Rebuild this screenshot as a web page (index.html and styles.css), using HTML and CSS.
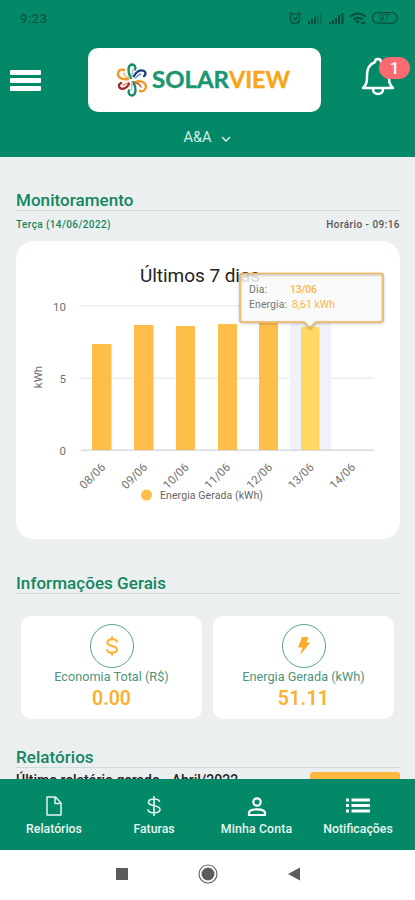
FILE: index.html
```html
<!DOCTYPE html>
<html lang="pt-BR">
<head>
    <meta charset="UTF-8">
    <meta name="viewport" content="width=device-width, initial-scale=1.0">
    <title>SolarView</title>
    <link rel="stylesheet" href="styles.css">
</head>
<body>
    <header>
        <div class="status-bar">
            <svg class="status-text" width="30" height="16"><text x="0" y="13" textLength="27">9:23</text></svg>
            <svg class="status-icons" width="112" height="16" viewBox="0 0 112 16">
                <g fill="none" stroke="#0b4c3b" stroke-width="1.2">
                    <circle cx="8" cy="8.500" r="4.800"/>
                    <path d="M2 4.500l3-2.500M14 4.500l-3-2.500M6 8l2 2 2.500-3M4 13.500l1-1M12 13.500l-1-1"/>
                    <rect x="85.500" y="2.600" width="24.500" height="10.500" rx="5"/>
                </g>
                <g fill="#0b4c3b">
                    <path d="M21 11h2v3h-2zM24 9h2v5h-2zM27 7h2v7h-2z"/>
                    <path d="M30 5h2v9h-2zM33 3h1.500v11h-1.500z" opacity=".4"/>
                    <path d="M42 12h2v2h-2zM45 10h2v4h-2zM48 8h2v6h-2zM51 5h2v9h-2zM54.500 3h2v11h-2z"/>
                </g>
                <g fill="none" stroke="#0b4c3b" stroke-width="2">
                    <path d="M63.500 6.500q7.500-6 15 0M66.500 9.500q4.500-3.600 9 0"/>
                </g>
                <path d="M68.500 11q2-1.500 4 0l-2 3zM74 12h4v2h-4z" fill="#0b4c3b"/>
                <text class="battery" x="97" y="11" text-anchor="middle">97</text>
            </svg>
        </div>

        <div class="top-row">
            <button class="menu-button" aria-label="Menu">
                <span></span><span></span><span></span>
            </button>
            <div class="logo">
                <svg width="32" height="36" viewBox="0 0 32 36" fill="none" stroke-width="2.400" stroke-linecap="round">
                    <path d="M15 16C11 10 12 3 16 2.500c3 0 4 3 3 5" stroke="#1c8c66"/>
                    <path d="M16 16c0-4 0-6 1-8" stroke="#8fd0b8" stroke-width="1.500"/>
                    <path d="M18 14c2-4 6-7 10-5 2 1 2 4 0 5" stroke="#243c7c"/>
                    <path d="M19 16c2-1 4-4 6-4" stroke="#5d8ec0" stroke-width="1.300"/>
                    <path d="M19 20c5-2 10 0 11 4 0 4-3 6-6 5" stroke="#ee9a24"/>
                    <path d="M19 21c4 0 5 2 6 4" stroke="#d9542b" stroke-width="1.500"/>
                    <path d="M17 20c4 6 3 13-1 13.500-3 0-4-3-3-5" stroke="#1c8c66"/>
                    <path d="M16 20c0 4 0 6-1 8" stroke="#a6c9c4" stroke-width="1.500"/>
                    <path d="M13 22c-2 4-6 6-9 4-2-2-1-4 1-5" stroke="#a3242b"/>
                    <path d="M13 20c-2 1-4 3-6 3" stroke="#d2844c" stroke-width="1.300"/>
                    <path d="M12 17C7 18 2 16 2 12c0-4 3-5 6-4" stroke="#ee9a24"/>
                    <path d="M13 16c-4-1-5-3-5-5" stroke="#efb564" stroke-width="1.500"/>
                </svg>
                <svg class="logo-text" width="142" height="32">
                    <text x="1" y="24" textLength="77" lengthAdjust="spacingAndGlyphs">SOLAR</text>
                    <text class="view" x="78" y="24" textLength="61" lengthAdjust="spacingAndGlyphs">VIEW</text>
                </svg>
            </div>
            <div class="bell">
                <svg width="34" height="40" viewBox="0 0 34 40" fill="none" stroke="#fff" stroke-width="2.500" stroke-linejoin="round" stroke-linecap="round">
                    <path d="M2 31c4-4 4-6 4-13C6 11 9 7 14 5c0-4 6-4 6 0 5 2 8 6 8 13 0 7 0 9 4 13z"/>
                    <path d="M12 32c0 3 2 5 5 5s5-2 5-5"/>
                </svg>
                <span class="badge">1</span>
            </div>
        </div>

        <div class="account">
            <span>A&amp;A</span>
            <svg width="10" height="6" viewBox="0 0 10 6" fill="none" stroke="#d5ebe3" stroke-width="1.500"><path d="M1 1l4 4 4-4"/></svg>
        </div>
    </header>

    <main>
        <section class="monitoring">
            <h2>Monitoramento</h2>
            <div class="date-row">
                <span class="day">Terça (14/06/2022)</span>
                <span class="time">Horário - 09:16</span>
            </div>
            <div class="chart-card">
                <svg width="384" height="298" viewBox="0 0 384 298">
                    <text class="chart-title" x="124" y="41" textLength="120">Últimos 7 dias</text>

                    <!-- Grid -->
                    <g fill="#eaecef">
                        <rect x="65" y="64" width="293" height="1.500"/>
                        <rect x="65" y="136.500" width="293" height="1.500"/>
                    </g>
                    <rect x="274" y="65" width="41" height="144" fill="#eff3f9"/>
                    <rect x="65" y="208.500" width="293" height="1.500" fill="#d9dae4"/>

                    <!-- Bars -->
                    <g fill="#ffbe4a">
                        <rect x="76" y="103" width="19.500" height="106"/>
                        <rect x="118" y="84" width="19.500" height="125"/>
                        <rect x="160" y="85" width="19" height="124"/>
                        <rect x="202" y="83" width="19" height="126"/>
                        <rect x="243" y="82" width="19" height="127"/>
                    </g>
                    <rect x="285" y="86" width="18.500" height="123" fill="#ffd862"/>

                    <!-- Axis -->
                    <g class="axis">
                        <text x="50" y="70" text-anchor="end">10</text>
                        <text x="50" y="142" text-anchor="end">5</text>
                        <text x="50" y="214" text-anchor="end">0</text>
                        <text transform="translate(26 136) rotate(-90)" text-anchor="middle">kWh</text>
                        <text transform="translate(90 227) rotate(-45)" text-anchor="end">08/06</text>
                        <text transform="translate(132 227) rotate(-45)" text-anchor="end">09/06</text>
                        <text transform="translate(173.500 227) rotate(-45)" text-anchor="end">10/06</text>
                        <text transform="translate(215 227) rotate(-45)" text-anchor="end">11/06</text>
                        <text transform="translate(257 227) rotate(-45)" text-anchor="end">12/06</text>
                        <text transform="translate(298.500 227) rotate(-45)" text-anchor="end">13/06</text>
                        <text transform="translate(340 227) rotate(-45)" text-anchor="end">14/06</text>
                    </g>

                    <circle cx="130.500" cy="254" r="5.500" fill="#ffbe4a"/>
                    <text class="legend" x="144" y="258" textLength="103">Energia Gerada (kWh)</text>

                    <!-- Tooltip -->
                    <path class="tooltip-fill" d="M226 32.500h139q2 0 2 2v44.500q0 2-2 2h-65l-6 6-6-6h-62q-2 0-2-2v-44.500q0-2 2-2z"/>
                    <path class="tooltip-border" d="M226 32.500h139q2 0 2 2v44.500q0 2-2 2h-65l-6 6-6-6h-62q-2 0-2-2v-44.500q0-2 2-2z"/>
                    <g class="tip">
                        <text x="233" y="52" textLength="18">Dia:</text>
                        <text x="233" y="67" textLength="38">Energia:</text>
                        <text class="tip-value bold" x="274" y="52" textLength="27">13/06</text>
                        <text class="tip-value" x="276" y="67" textLength="43">8,61 kWh</text>
                    </g>
                </svg>
            </div>
        </section>

        <section class="info">
            <h2>Informações Gerais</h2>
            <div class="cards">
                <div class="card">
                    <div class="circle">
                        <svg width="12" height="20" viewBox="0 0 12 20" fill="none" stroke="#fbb02f" stroke-width="2">
                            <path d="M11 6.500C11 4 8.500 3.300 6 3.300S1.300 4.300 1.300 6.500C1.300 11 11 9 11 13.500c0 2.200-2.500 3.200-5 3.200s-5-1-5-3.400M6 .500v3M6 16.500v3"/>
                        </svg>
                    </div>
                    <p class="label">Economia Total (R$)</p>
                    <p class="value">0.00</p>
                </div>
                <div class="card">
                    <div class="circle">
                        <svg width="14" height="20" viewBox="0 0 14 20"><path d="M5 1h6.500L9.500 6.500H13.500L3 19l2.500-7.500H1z" fill="#fbac2b"/></svg>
                    </div>
                    <p class="label">Energia Gerada (kWh)</p>
                    <p class="value wide">51.11</p>
                </div>
            </div>
        </section>

        <section class="reports">
            <h2>Relatórios</h2>
            <div class="report-row">
                <span>Último relatório gerado - Abril/2022</span>
                <span class="report-button"></span>
            </div>
        </section>
    </main>

    <nav class="tabs">
        <a class="tab">
            <svg width="18" height="20" viewBox="0 0 18 20" fill="none" stroke="#e3f3ed" stroke-width="1.500" stroke-linejoin="round"><path d="M2 1h8.500L16 7v12H2zM10 1v6.500h6"/></svg>
            <span>Relatórios</span>
        </a>
        <a class="tab">
            <svg width="14" height="20" viewBox="0 0 14 20" fill="none" stroke="#e3f3ed" stroke-width="1.600"><path d="M12.500 6C12.500 3.500 10 3 7 3S1.500 4 1.500 6.300C1.500 11.500 13 8 13 13.500c0 2.500-3 3.300-6 3.300s-6-1-6-3.600M7 0v20"/></svg>
            <span>Faturas</span>
        </a>
        <a class="tab">
            <svg width="20" height="20" viewBox="0 0 20 20" fill="none" stroke="#fff" stroke-width="2.200"><circle cx="10" cy="6" r="3.700"/><path d="M2 19v-2C2 14.500 6 13.300 10 13.300s8 1.200 8 3.700v2z"/></svg>
            <span class="account-label">Minha Conta</span>
        </a>
        <a class="tab">
            <svg width="26" height="20" viewBox="0 0 26 20" fill="#fff"><path d="M1 2.500h3v3H1zM6.500 2.500H25v3H6.500zM1 8h3v3H1zM6.500 8H25v3H6.500zM1 13.500h3v3H1zM6.500 13.500H25v3H6.500z"/></svg>
            <span>Notificações</span>
        </a>
    </nav>

    <div class="system-bar">
        <svg width="12" height="20" viewBox="0 0 12 20"><rect y="4" width="12" height="12" fill="#5c5c5c"/></svg>
        <svg width="20" height="20" viewBox="0 0 20 20"><circle cx="10" cy="10" r="9" fill="none" stroke="#666" stroke-width="1.200"/><circle cx="10" cy="10" r="6.500" fill="#5c5c5c"/></svg>
        <svg width="12" height="20" viewBox="0 0 12 20"><path d="M12 3.500v13L0 10z" fill="#5c5c5c"/></svg>
    </div>
</body>
</html>
```
FILE: styles.css
```css
* {
    box-sizing: border-box;
}

body {
    font-family: Roboto, sans-serif;
    margin: 0;
    height: 900px;
    background-color: #ebeff0;
    display: flex;
    flex-direction: column;
    overflow: hidden;
}

svg {
    display: block;
    flex-shrink: 0;
}

/* Header */
header {
    height: 157px;
    flex-shrink: 0;
    background-color: #038967;
}

.status-bar {
    display: flex;
    justify-content: space-between;
    padding: 10px 16px 0 20px;
    height: 48px;
}

.status-text text {
    font-size: 13px;
    fill: #0b4c3b;
}

.battery {
    font-size: 9px;
    fill: #0b4c3b;
}

.top-row {
    display: flex;
    align-items: center;
    height: 64px;
    padding-left: 10px;
}

.menu-button {
    display: flex;
    flex-direction: column;
    gap: 3px;
    width: 31px;
    padding: 0;
    border: none;
    background: none;
}

.menu-button span {
    height: 5px;
    border-radius: 1px;
    background-color: #fff;
}

.logo {
    display: flex;
    align-items: center;
    width: 233px;
    height: 64px;
    margin-left: 47px;
    padding-left: 28px;
    border-radius: 10px;
    background-color: #fff;
}

.logo-text {
    margin-left: 3px;
}

.logo-text text {
    font-family: Lato, sans-serif;
    font-size: 22.5px;
    font-weight: 700;
    fill: #1b9670;
    stroke: #1b9670;
    stroke-width: 0.4;
}

.logo-text .view {
    fill: #f7a619;
    stroke: #f7a619;
}

.bell {
    position: relative;
    margin: -6px 0 0 40px;
}

.badge {
    position: absolute;
    left: 18px;
    top: 0;
    width: 31px;
    height: 22px;
    border-radius: 11px;
    background-color: #fa6a70;
    color: #fff;
    font-size: 17px;
    font-weight: 500;
    line-height: 23px;
    text-align: center;
}

.account {
    display: flex;
    justify-content: center;
    align-items: center;
    gap: 10px;
    height: 48px;
    padding-top: 2px;
    color: #d5ebe3;
    font-size: 14.5px;
}

.account svg {
    margin-top: 3px;
}

/* Content */
main {
    height: 622px;
    flex-shrink: 0;
    overflow: hidden;
    padding: 32px 15px 0 16px;
}

h2 {
    margin: 0;
    height: 22px;
    border-bottom: 1px solid #cbdddb;
    color: #138661;
    font-size: 17px;
    font-weight: 500;
    letter-spacing: 0.05px;
    line-height: 22px;
}

.date-row {
    display: flex;
    justify-content: space-between;
    height: 30px;
    padding-top: 8px;
    font-size: 10px;
    font-weight: 500;
    line-height: 12px;
}

.day {
    color: #138661;
    letter-spacing: 0.4px;
}

.time {
    color: #555;
    letter-spacing: 0.45px;
}

.chart-card {
    height: 298px;
    border-radius: 18px;
    background-color: #fff;
}

.chart-title {
    font-size: 19px;
    fill: #222;
}

.axis {
    font-size: 11.5px;
    fill: #707070;
}

.legend {
    font-size: 10.5px;
    fill: #666;
}

.tooltip-fill {
    fill: rgba(249, 249, 249, 0.85);
}

.tooltip-border {
    fill: none;
    stroke: #efb556;
    stroke-width: 1.5;
    filter: drop-shadow(0 1px 1px rgba(0, 0, 0, 0.3));
}

.tip {
    font-size: 10.5px;
    fill: #777;
}

.tip-value {
    fill: #fcb545;
}

.bold {
    font-weight: 500;
}

.info {
    margin-top: 33px;
}

.cards {
    display: grid;
    grid-template-columns: 1fr 1fr;
    gap: 11px;
    padding: 22px 6px 0 5px;
}

.card {
    display: flex;
    flex-direction: column;
    align-items: center;
    height: 103px;
    padding-top: 8px;
    border-radius: 10px;
    background-color: #fff;
}

.circle {
    display: flex;
    justify-content: center;
    align-items: center;
    width: 44px;
    height: 44px;
    border: 1.5px solid #5aa28b;
    border-radius: 50%;
}

.card p {
    margin: 0;
}

.label {
    color: #4c957d;
    font-size: 12.7px;
    line-height: 17px;
}

.value {
    color: #fbb02f;
    font-size: 19.5px;
    font-weight: 600;
    line-height: 27px;
}

.wide {
    letter-spacing: 0.3px;
}

.reports {
    margin-top: 27px;
}

.report-row {
    display: flex;
    justify-content: space-between;
    padding-top: 4px;
    color: #222;
    font-size: 14px;
    font-weight: 500;
    line-height: 16px;
}

.report-button {
    width: 90px;
    height: 28px;
    border-radius: 3px;
    background-color: #fdb73e;
}

/* Bottom bars */
.tabs {
    display: grid;
    grid-template-columns: 102px 98px 107px 96px;
    height: 71px;
    flex-shrink: 0;
    padding: 17px 8px 0 3px;
    background-color: #038967;
}

.tab {
    display: flex;
    flex-direction: column;
    align-items: center;
    gap: 6px;
    color: #e9f6f1;
    font-size: 12.3px;
    font-weight: 500;
    line-height: 15px;
}

.account-label {
    letter-spacing: 0.15px;
}

.system-bar {
    display: flex;
    justify-content: center;
    align-items: center;
    gap: 70px;
    flex: 1;
    padding-bottom: 2px;
    background-color: #fff;
}
```
